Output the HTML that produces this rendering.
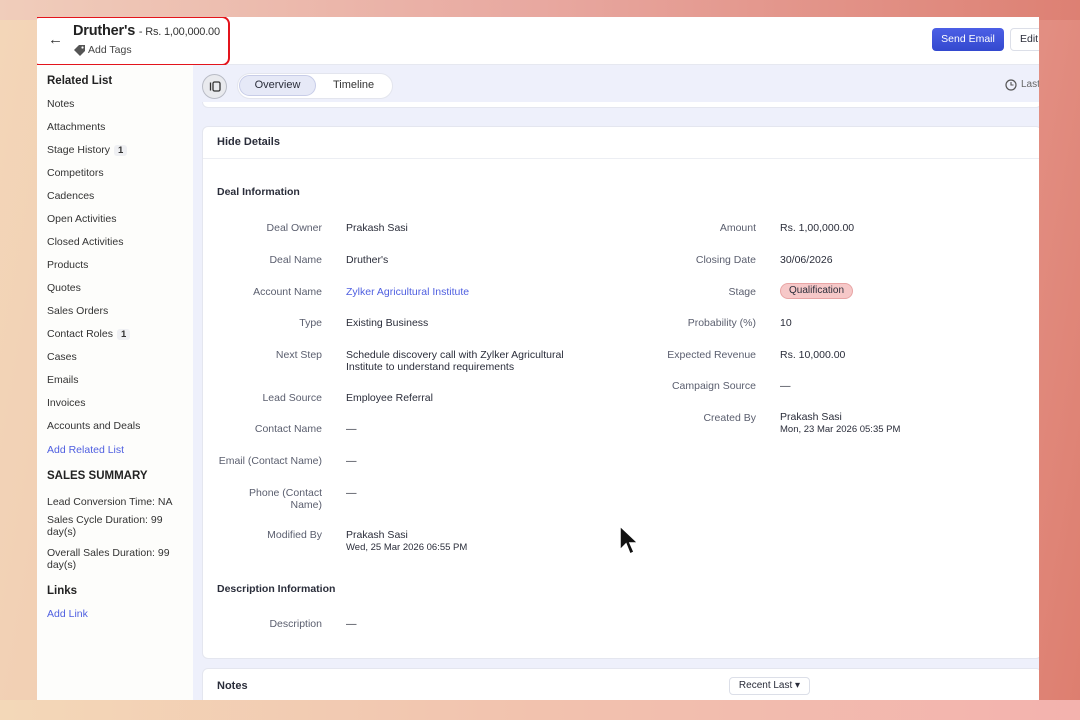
<!DOCTYPE html>
<html><head><meta charset="utf-8"><style>
*{margin:0;padding:0;box-sizing:border-box}
body{width:1080px;height:720px;overflow:hidden;position:relative;font-family:"Liberation Sans",sans-serif;
background:linear-gradient(100deg,#f3d6b8 0%,#f0c4ad 35%,#eba9a2 65%,#dd7e6f 100%);}
.bgtop{position:absolute;left:0;top:0;width:1080px;height:20px;background:linear-gradient(90deg,#f0cdbb,#e8a8a0 50%,#dd8073)}
.bgbot{position:absolute;left:0;top:700px;width:1080px;height:20px;background:linear-gradient(90deg,#f3d8b8,#f2c2ae 50%,#f3b2ae)}
.win{position:absolute;left:37px;top:17px;width:1002px;height:683px;background:#fff;overflow:hidden;font-size:10.5px;color:#2a2d3a}
.hdr{position:absolute;left:0;top:0;width:1002px;height:48px;background:#fff;border-bottom:1px solid #e6e8f0}
.side{position:absolute;left:0;top:48px;width:156px;height:640px;background:#fdfdfb}
.side div{position:absolute;left:10px;font-size:10.5px;color:#333}
.side .h{font-weight:bold;font-size:11.5px;color:#222}
.side .l{color:#4f5fe0}
.badge{display:inline-block;background:#eff0f3;border-radius:3px;padding:0 4px;margin-left:4px;font-size:9.5px;font-weight:bold}
.main{position:absolute;left:156px;top:48px;width:846px;height:640px;background:#eef0fb}
.card{position:absolute;left:9px;background:#fff;border-radius:6px;border:1px solid #e4e6ef}
.lab{position:absolute;text-align:right;width:140px;color:#5a5e6e;font-size:10.5px}
.val{position:absolute;color:#2a2d3a;font-size:10.5px;line-height:12px}
</style></head><body>
<div class="bgtop"></div><div class="bgbot"></div>
<div class="win">
 <div class="hdr">
  <div style="position:absolute;left:11px;top:14px;font-size:15px;color:#333">&#8592;</div>
  <div style="position:absolute;left:36px;top:6px;font-size:14.5px;font-weight:bold;color:#222;letter-spacing:-0.2px">Druther's <span style="font-weight:normal;font-size:11px;color:#333">- Rs. 1,00,000.00</span></div>
  <svg style="position:absolute;left:36px;top:27px" width="14" height="12" viewBox="0 0 14 12"><path d="M1 6 L6 1 H12 V7 L7 12 Z" fill="#555"/><circle cx="9.5" cy="3.5" r="1.1" fill="#fff"/></svg>
  <div style="position:absolute;left:51px;top:27px;font-size:10.5px;color:#444">Add Tags</div>
  <div style="position:absolute;left:-6px;top:-1px;width:199px;height:50px;border:2.5px solid #e3141c;border-radius:8px"></div>
  <div style="position:absolute;left:895px;top:11px;width:72px;height:23px;background:linear-gradient(#4c5fe6,#3349cf);border-radius:4px;color:#fff;font-size:10.5px;text-align:center;line-height:23px">Send Email</div>
  <div style="position:absolute;left:973px;top:11px;width:40px;height:23px;border:1px solid #dcdfe8;border-radius:4px;font-size:10.5px;line-height:21px;padding-left:9px">Edit</div>
 </div>
 <div class="side">
  <div class="h" style="top:10px">Related List</div>
  <div style="top:33px">Notes</div>
  <div style="top:56px">Attachments</div>
  <div style="top:79px">Stage History<span class="badge">1</span></div>
  <div style="top:102px">Competitors</div>
  <div style="top:125px">Cadences</div>
  <div style="top:148px">Open Activities</div>
  <div style="top:171px">Closed Activities</div>
  <div style="top:194px">Products</div>
  <div style="top:217px">Quotes</div>
  <div style="top:240px">Sales Orders</div>
  <div style="top:263px">Contact Roles<span class="badge">1</span></div>
  <div style="top:286px">Cases</div>
  <div style="top:309px">Emails</div>
  <div style="top:332px">Invoices</div>
  <div style="top:355px">Accounts and Deals</div>
  <div class="l" style="top:379px">Add Related List</div>
  <div class="h" style="top:405px">SALES SUMMARY</div>
  <div style="top:431px">Lead Conversion Time: NA</div>
  <div style="top:449px;width:130px;line-height:12px">Sales Cycle Duration: 99 day(s)</div>
  <div style="top:482px;width:130px;line-height:12px">Overall Sales Duration: 99 day(s)</div>
  <div class="h" style="top:520px">Links</div>
  <div class="l" style="top:543px">Add Link</div>
 </div>
 <div class="main">
  <div class="card" style="top:37px;height:6px;width:840px;border-top:none;border-radius:0 0 6px 6px"></div>
  <div style="position:absolute;left:9px;top:9px;width:25px;height:25px;border-radius:50%;background:#e9eaee;border:1px solid #b9bcc6"></div>
  <svg style="position:absolute;left:16px;top:16px" width="12" height="11" viewBox="0 0 12 11"><rect x="4" y="1" width="7" height="9" rx="1.5" fill="none" stroke="#333" stroke-width="1.3"/><line x1="1.5" y1="1.5" x2="1.5" y2="9.5" stroke="#333" stroke-width="1.3"/></svg>
  <div style="position:absolute;left:44px;top:8px;width:156px;height:26px;background:#fff;border-radius:13px;border:1px solid #e3e5ee"></div>
  <div style="position:absolute;left:46px;top:10px;width:77px;height:21px;background:#e6e9f7;border-radius:11px;border:1px solid #c8cde8;text-align:center;line-height:19px;font-size:11px">Overview</div>
  <div style="position:absolute;left:140px;top:14px;font-size:11px;color:#333">Timeline</div>
  <svg style="position:absolute;left:812px;top:14px" width="12" height="12" viewBox="0 0 12 12"><circle cx="6" cy="6" r="5" fill="none" stroke="#555" stroke-width="1.2"/><path d="M6 3V6H8.5" fill="none" stroke="#555" stroke-width="1.1"/></svg>
  <div style="position:absolute;left:828px;top:14px;font-size:10px;color:#666">Last</div>
  <div class="card" style="top:61px;height:533px;width:840px">
   <div style="position:absolute;left:14px;top:9px;font-weight:bold;font-size:11px">Hide Details</div>
   <div style="position:absolute;left:0;top:31px;width:840px;border-top:1px solid #eceef3"></div>
   <div style="position:absolute;left:14px;top:59px;font-weight:bold;font-size:10.5px">Deal Information</div>
   <div class="lab" style="left:-21px;top:95px">Deal Owner</div><div class="val" style="left:143px;top:95px">Prakash Sasi</div>
   <div class="lab" style="left:-21px;top:127px">Deal Name</div><div class="val" style="left:143px;top:127px">Druther's</div>
   <div class="lab" style="left:-21px;top:159px">Account Name</div><div class="val" style="left:143px;top:159px;color:#4f5fe0">Zylker Agricultural Institute</div>
   <div class="lab" style="left:-21px;top:190px">Type</div><div class="val" style="left:143px;top:190px">Existing Business</div>
   <div class="lab" style="left:-21px;top:222px">Next Step</div><div class="val" style="left:143px;top:222px;width:240px">Schedule discovery call with Zylker Agricultural Institute to understand requirements</div>
   <div class="lab" style="left:-21px;top:265px">Lead Source</div><div class="val" style="left:143px;top:265px">Employee Referral</div>
   <div class="lab" style="left:-21px;top:296px">Contact Name</div><div class="val" style="left:143px;top:296px">—</div>
   <div class="lab" style="left:-21px;top:328px">Email (Contact Name)</div><div class="val" style="left:143px;top:328px">—</div>
   <div class="lab" style="left:-21px;top:360px;line-height:12px;width:140px">Phone (Contact<br>Name)</div><div class="val" style="left:143px;top:360px">—</div>
   <div class="lab" style="left:-21px;top:402px">Modified By</div><div class="val" style="left:143px;top:402px">Prakash Sasi<br><span style="font-size:9.5px">Wed, 25 Mar 2026 06:55 PM</span></div>
   <div class="lab" style="left:413px;top:95px">Amount</div><div class="val" style="left:577px;top:95px">Rs. 1,00,000.00</div>
   <div class="lab" style="left:413px;top:127px">Closing Date</div><div class="val" style="left:577px;top:127px">30/06/2026</div>
   <div class="lab" style="left:413px;top:159px">Stage</div><div class="val" style="left:577px;top:156px;height:16px;line-height:14px;background:#f6c8c8;border:1px solid #e8a5a5;border-radius:8px;padding:0 8px;font-size:10px">Qualification</div>
   <div class="lab" style="left:413px;top:190px">Probability (%)</div><div class="val" style="left:577px;top:190px">10</div>
   <div class="lab" style="left:413px;top:222px">Expected Revenue</div><div class="val" style="left:577px;top:222px">Rs. 10,000.00</div>
   <div class="lab" style="left:413px;top:253px">Campaign Source</div><div class="val" style="left:577px;top:253px">—</div>
   <div class="lab" style="left:413px;top:285px">Created By</div><div class="val" style="left:577px;top:284px">Prakash Sasi<br><span style="font-size:9.5px">Mon, 23 Mar 2026 05:35 PM</span></div>
   <div style="position:absolute;left:14px;top:456px;font-weight:bold;font-size:10.5px">Description Information</div>
   <div class="lab" style="left:-21px;top:491px">Description</div><div class="val" style="left:143px;top:491px">—</div>
  </div>
  <div class="card" style="top:603px;height:50px;width:840px">
   <div style="position:absolute;left:14px;top:11px;font-weight:bold;font-size:11px">Notes</div>
   <div style="position:absolute;left:526px;top:8px;width:81px;height:18px;border:1px solid #dcdfe8;border-radius:4px;font-size:10px;line-height:16px;text-align:center">Recent Last &#9662;</div>
  </div>
 </div>
</div>
<svg style="position:absolute;left:618px;top:525px" width="22" height="34" viewBox="0 0 22 34"><path d="M2 1 V25 L8 19 L12 29 L16 27 L12 18 H20 Z" fill="#111" stroke="#fff" stroke-width="1.5"/></svg>
</body></html>
